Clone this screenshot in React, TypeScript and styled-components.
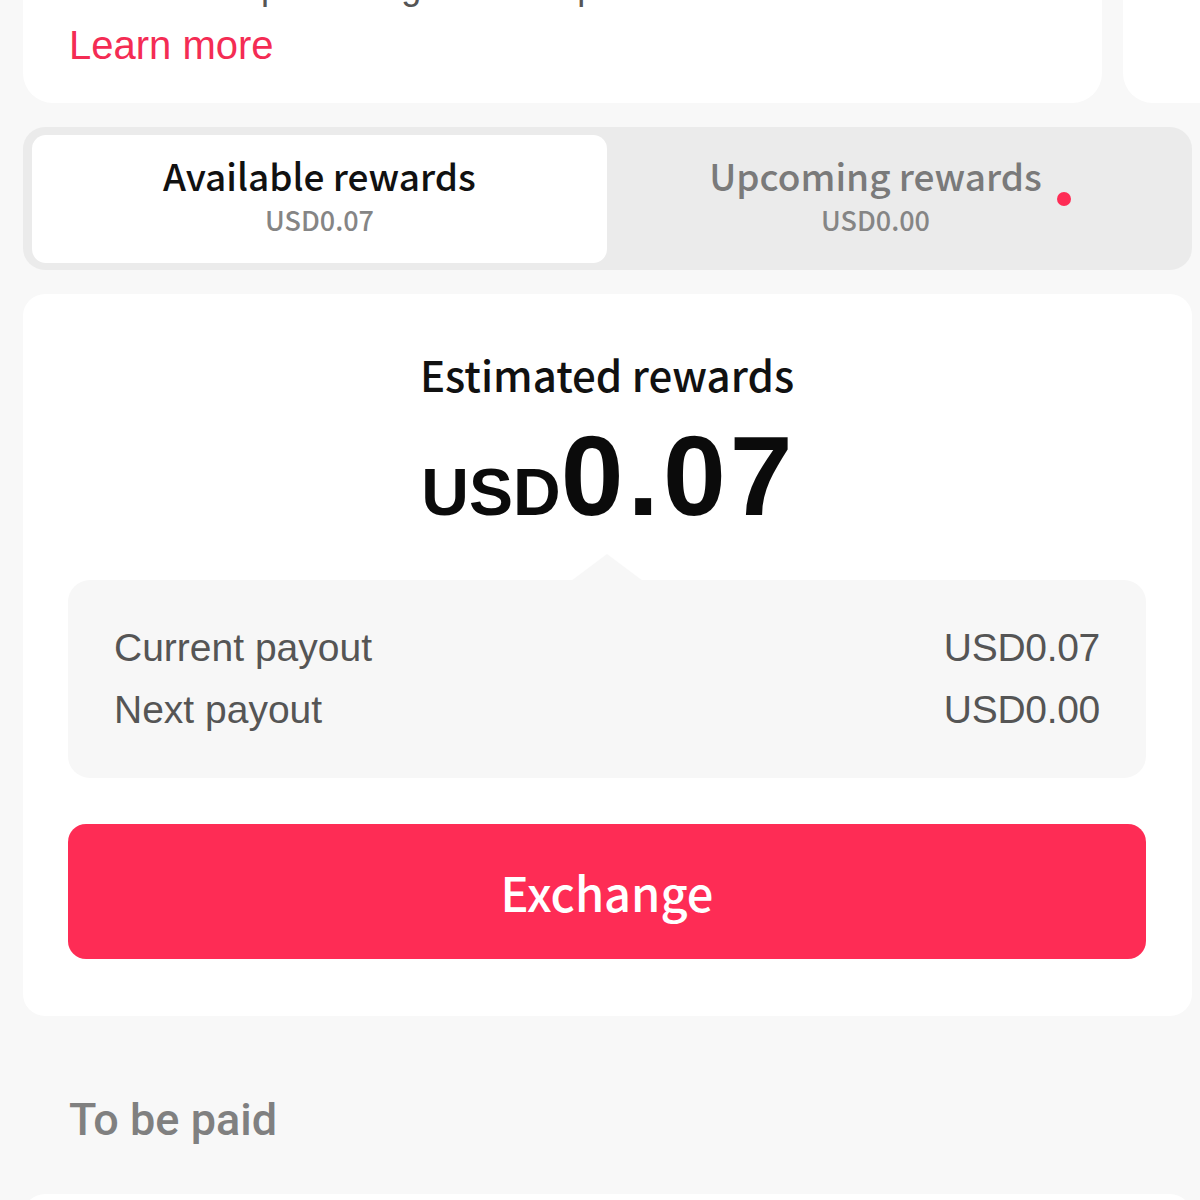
import React from "react";
import styled, { createGlobalStyle } from "styled-components";

const Global = createGlobalStyle`
  html, body { margin: 0; padding: 0; background: #f8f8f8; }
  body { font-family: "Liberation Sans", Arial, sans-serif; overflow: hidden; }
`;

const Page = styled.div`
  width: 1200px;
  height: 1200px;
  overflow: hidden;
  box-sizing: border-box;
  padding: 0 8px 0 23px;
  display: flex;
  flex-direction: column;
  & > * { flex-shrink: 0; }
`;

const Carousel = styled.div`
  display: flex;
  gap: 21px;
  margin-top: -60px;
  margin-right: -8px;
  overflow: hidden;
`;

const InfoCard = styled.div<{ $w: number }>`
  flex: 0 0 ${(p) => p.$w}px;
  background: #fff;
  border-radius: 30px;
  box-sizing: border-box;
  padding: 25px 46px 34px;
  display: flex;
  flex-direction: column;
`;

const Desc = styled.div`
  font-size: 36px;
  line-height: 44px;
  color: #555;
  white-space: nowrap;
`;

const LearnMore = styled.a`
  margin-top: 12px;
  font-size: 40px;
  line-height: 48px;
  color: #f42c54;
  text-decoration: none;
`;

const Tabs = styled.div`
  margin-top: 24px;
  background: #ebebeb;
  border-radius: 22px;
  padding: 8px 0 7px 9px;
  height: 143px;
  box-sizing: border-box;
  display: grid;
  grid-template-columns: 575px 1fr;
`;

const Tab = styled.div<{ $active?: boolean }>`
  position: relative;
  background: ${(p) => (p.$active ? "#fff" : "transparent")};
  border-radius: 14px;
  display: flex;
  flex-direction: column;
  align-items: center;
  justify-content: center;
  padding-bottom: 8px;
  padding-right: ${(p) => (p.$active ? "0" : "48px")};
`;

const TabTitle = styled.div<{ $active?: boolean }>`
  font-family: "Noto Sans CJK SC", "Noto Sans", sans-serif;
  font-size: 37px;
  line-height: 44px;
  font-weight: 500;
  margin-bottom: 6px;
  color: ${(p) => (p.$active ? "#111" : "#7a7a7a")};
  position: relative;
`;

const TabSub = styled.div`
  font-family: "Noto Sans CJK SC", "Noto Sans", sans-serif;
  font-size: 27px;
  line-height: 34px;
  font-weight: 500;
  color: #858585;
`;

const Dot = styled.span`
  position: absolute;
  right: -29px;
  top: 39px;
  width: 14px;
  height: 14px;
  border-radius: 50%;
  background: #fe2c55;
`;

const MainCard = styled.div`
  margin-top: 24px;
  background: #fff;
  border-radius: 22px;
  padding: 50px 46px 57px 45px;
  display: flex;
  flex-direction: column;
  align-items: stretch;
`;

const Heading = styled.div`
  font-family: "Noto Sans CJK SC", "Noto Sans", sans-serif;
  font-size: 42px;
  line-height: 60px;
  font-weight: 500;
  color: #111;
  text-align: center;
`;

const Amount = styled.div`
  display: flex;
  justify-content: center;
  align-items: baseline;
  font-family: "Liberation Sans", Arial, sans-serif;
  font-weight: 700;
  color: #0b0b0b;
  line-height: 110px;
  margin-top: 17px;
`;

const Currency = styled.span`
  font-size: 66px;
`;

const Value = styled.span`
  font-size: 113px;
  letter-spacing: 4px;
  margin-right: -4px;
`;

const PayoutBox = styled.div`
  position: relative;
  margin-top: 33px;
  background: #f7f7f7;
  border-radius: 22px;
  padding: 46px 46px 46px 46px;
  display: flex;
  flex-direction: column;
  gap: 18px;
  &::before {
    content: "";
    position: absolute;
    left: 50%;
    top: -26px;
    margin-left: -36px;
    width: 0;
    height: 0;
    border-left: 36px solid transparent;
    border-right: 36px solid transparent;
    border-bottom: 27px solid #f7f7f7;
  }
`;

const PayoutRow = styled.div`
  display: flex;
  justify-content: space-between;
  font-size: 39px;
  line-height: 44px;
  color: #555;
`;

const PayoutValue = styled.span`
  letter-spacing: -0.3px;
`;

const ExchangeButton = styled.button`
  margin-top: 46px;
  height: 135px;
  border: none;
  border-radius: 18px;
  background: #fe2c55;
  color: #fff;
  font-family: "Noto Sans CJK SC", "Noto Sans", sans-serif;
  font-size: 47px;
  font-weight: 500;
  cursor: pointer;
`;

const SectionTitle = styled.div`
  margin: 78px 0 0 46px;
  font-family: Roboto, "Liberation Sans", sans-serif;
  font-size: 45px;
  line-height: 52px;
  font-weight: 500;
  color: #808080;
`;

const BottomCard = styled.div`
  margin-top: 48px;
  background: #fff;
  border-radius: 22px;
  height: 200px;
`;

export default function App() {
  return (
    <>
      <Global />
      <Page>
        <Carousel>
          <InfoCard $w={1079}>
            <Desc>Rewards depend on gifts and topics.</Desc>
            <LearnMore href="#">Learn more</LearnMore>
          </InfoCard>
          <InfoCard $w={1079} />
        </Carousel>

        <Tabs>
          <Tab $active>
            <TabTitle $active>Available rewards</TabTitle>
            <TabSub>USD0.07</TabSub>
          </Tab>
          <Tab>
            <TabTitle>
              Upcoming rewards
              <Dot />
            </TabTitle>
            <TabSub>USD0.00</TabSub>
          </Tab>
        </Tabs>

        <MainCard>
          <Heading>Estimated rewards</Heading>
          <Amount>
            <Currency>USD</Currency>
            <Value>0.07</Value>
          </Amount>
          <PayoutBox>
            <PayoutRow>
              <span>Current payout</span>
              <PayoutValue>USD0.07</PayoutValue>
            </PayoutRow>
            <PayoutRow>
              <span>Next payout</span>
              <PayoutValue>USD0.00</PayoutValue>
            </PayoutRow>
          </PayoutBox>
          <ExchangeButton>Exchange</ExchangeButton>
        </MainCard>

        <SectionTitle>To be paid</SectionTitle>
        <BottomCard />
      </Page>
    </>
  );
}
